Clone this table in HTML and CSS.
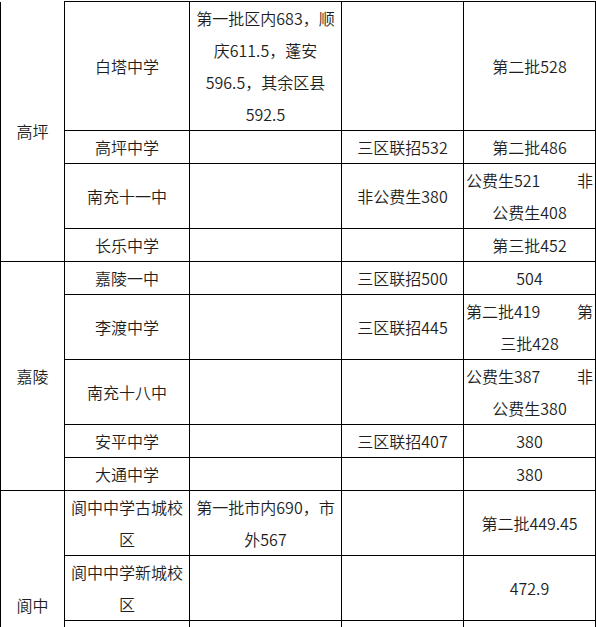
FILE: index.html
```html
<!DOCTYPE html>
<html lang="zh-CN">
<head>
<meta charset="utf-8">
<title>分数线</title>
<link rel="stylesheet" href="styles.css">
</head>
<body>
<table class="grid">
  <colgroup>
    <col class="c-region">
    <col class="c-school">
    <col class="c-first">
    <col class="c-joint">
    <col class="c-second">
  </colgroup>
  <tbody>
    <tr>
      <td rowspan="4" class="region region-top">高坪</td>
      <td>白塔中学</td>
      <td>第一批区内683，顺<br>庆611.5，蓬安<br>596.5，其余区县<br>592.5</td>
      <td></td>
      <td>第二批528</td>
    </tr>
    <tr>
      <td>高坪中学</td>
      <td></td>
      <td>三区联招532</td>
      <td>第二批486</td>
    </tr>
    <tr>
      <td>南充十一中</td>
      <td></td>
      <td>非公费生380</td>
      <td><div class="split"><span>公费生521</span><span>非</span></div><div>公费生408</div></td>
    </tr>
    <tr>
      <td>长乐中学</td>
      <td></td>
      <td></td>
      <td>第三批452</td>
    </tr>
    <tr>
      <td rowspan="5" class="region">嘉陵</td>
      <td>嘉陵一中</td>
      <td></td>
      <td>三区联招500</td>
      <td>504</td>
    </tr>
    <tr>
      <td>李渡中学</td>
      <td></td>
      <td>三区联招445</td>
      <td><div class="split"><span>第二批419</span><span>第</span></div><div>三批428</div></td>
    </tr>
    <tr>
      <td>南充十八中</td>
      <td></td>
      <td></td>
      <td><div class="split"><span>公费生387</span><span>非</span></div><div>公费生380</div></td>
    </tr>
    <tr>
      <td>安平中学</td>
      <td></td>
      <td>三区联招407</td>
      <td>380</td>
    </tr>
    <tr>
      <td>大通中学</td>
      <td></td>
      <td></td>
      <td>380</td>
    </tr>
    <tr>
      <td rowspan="4" class="region">阆中</td>
      <td>阆中中学古城校<br>区</td>
      <td>第一批市内690，市<br>外567</td>
      <td></td>
      <td>第二批449.45</td>
    </tr>
    <tr>
      <td>阆中中学新城校<br>区</td>
      <td></td>
      <td></td>
      <td>472.9</td>
    </tr>
    <tr>
      <td>&nbsp;</td>
      <td></td>
      <td></td>
      <td></td>
    </tr>
    <tr>
      <td>&nbsp;<br>&nbsp;</td>
      <td></td>
      <td></td>
      <td></td>
    </tr>
  </tbody>
</table>
</body>
</html>
```

FILE: styles.css
```css
html, body {
  margin: 0;
  padding: 0;
  background: #ffffff;
}

body {
  font-family: "Noto Sans CJK SC", "Noto Sans", sans-serif;
  color: #1e1e1e;
}

.grid {
  border-collapse: collapse;
  table-layout: fixed;
  width: 595px;
  margin-top: 1px;
}

.c-region { width: 64px; }
.c-school { width: 125px; }
.c-first { width: 152px; }
.c-joint { width: 122px; }
.c-second { width: 132px; }

.grid td {
  border: 1px solid #000000;
  padding: 0 2px;
  font-size: 16px;
  font-weight: 350;
  line-height: 32px;
  text-align: center;
  vertical-align: middle;
  white-space: nowrap;
}

.grid td.region-top {
  border-top-style: hidden;
}

.split {
  display: flex;
  justify-content: space-between;
}
```
